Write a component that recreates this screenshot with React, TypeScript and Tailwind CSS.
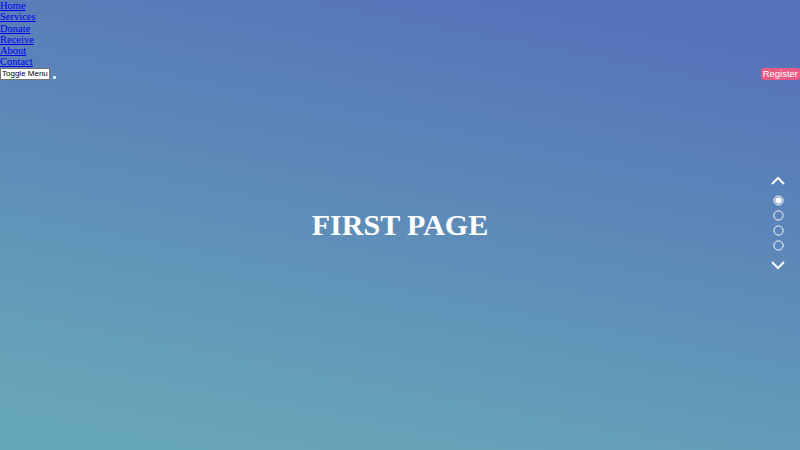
import React from 'react';

const links = ['Home', 'Services', 'Donate', 'Receive', 'About', 'Contact'];

export default function App() {
  return (
    <div className="relative h-[450px] w-full overflow-hidden bg-[linear-gradient(191deg,#5571b9_6%,#67a8b8_94%)]">
      {/* Header / menu */}
      <header className="absolute inset-x-0 top-0 z-10">
        <nav className="flex flex-col items-start font-['Liberation_Serif',serif] text-[10.5px] leading-[11.3px]">
          {links.map((l) => (
            <a key={l} href="#" className="text-[#0000ee] underline">
              {l}
            </a>
          ))}
        </nav>
        <div className="flex items-center justify-between">
          <div className="flex items-end gap-[3px]">
            <button className="border border-[#767676] bg-white px-[1px] font-['Liberation_Sans',sans-serif] text-[8px] leading-[10px] text-black">
              Toggle Menu
            </button>
            <span className="mb-[1px] h-[3px] w-[3px] bg-[#cfe6ff]" />
          </div>
          <button className="rounded-[3px] bg-[#ea5a82] px-[2px] font-['Liberation_Sans',sans-serif] text-[9.5px] leading-[12px] text-white">
            Register
          </button>
        </div>
      </header>

      {/* Section */}
      <main className="flex h-full items-center justify-center">
        <h1 className="font-['Liberation_Serif',serif] text-[30px] font-bold leading-none text-white">
          FIRST PAGE
        </h1>
      </main>

      {/* Section nav */}
      <div className="absolute right-[14px] top-[calc(50%-2px)] flex -translate-y-1/2 flex-col items-center gap-[4px]">
        <svg width="16" height="10" viewBox="0 0 16 10" className="mb-[5px]">
          <path d="M2 8 L8 2 L14 8" stroke="white" strokeWidth="2" fill="none" />
        </svg>
        {[0, 1, 2, 3].map((i) => (
          <svg key={i} width="11" height="11" viewBox="0 0 11 11">
            <circle cx="5.5" cy="5.5" r="4.6" stroke="white" strokeWidth="1" fill="none" />
            {i === 0 && <circle cx="5.5" cy="5.5" r="3.2" fill="white" />}
          </svg>
        ))}
        <svg width="16" height="10" viewBox="0 0 16 10" className="mt-[5px]">
          <path d="M2 2 L8 8 L14 2" stroke="white" strokeWidth="2" fill="none" />
        </svg>
      </div>
    </div>
  );
}
